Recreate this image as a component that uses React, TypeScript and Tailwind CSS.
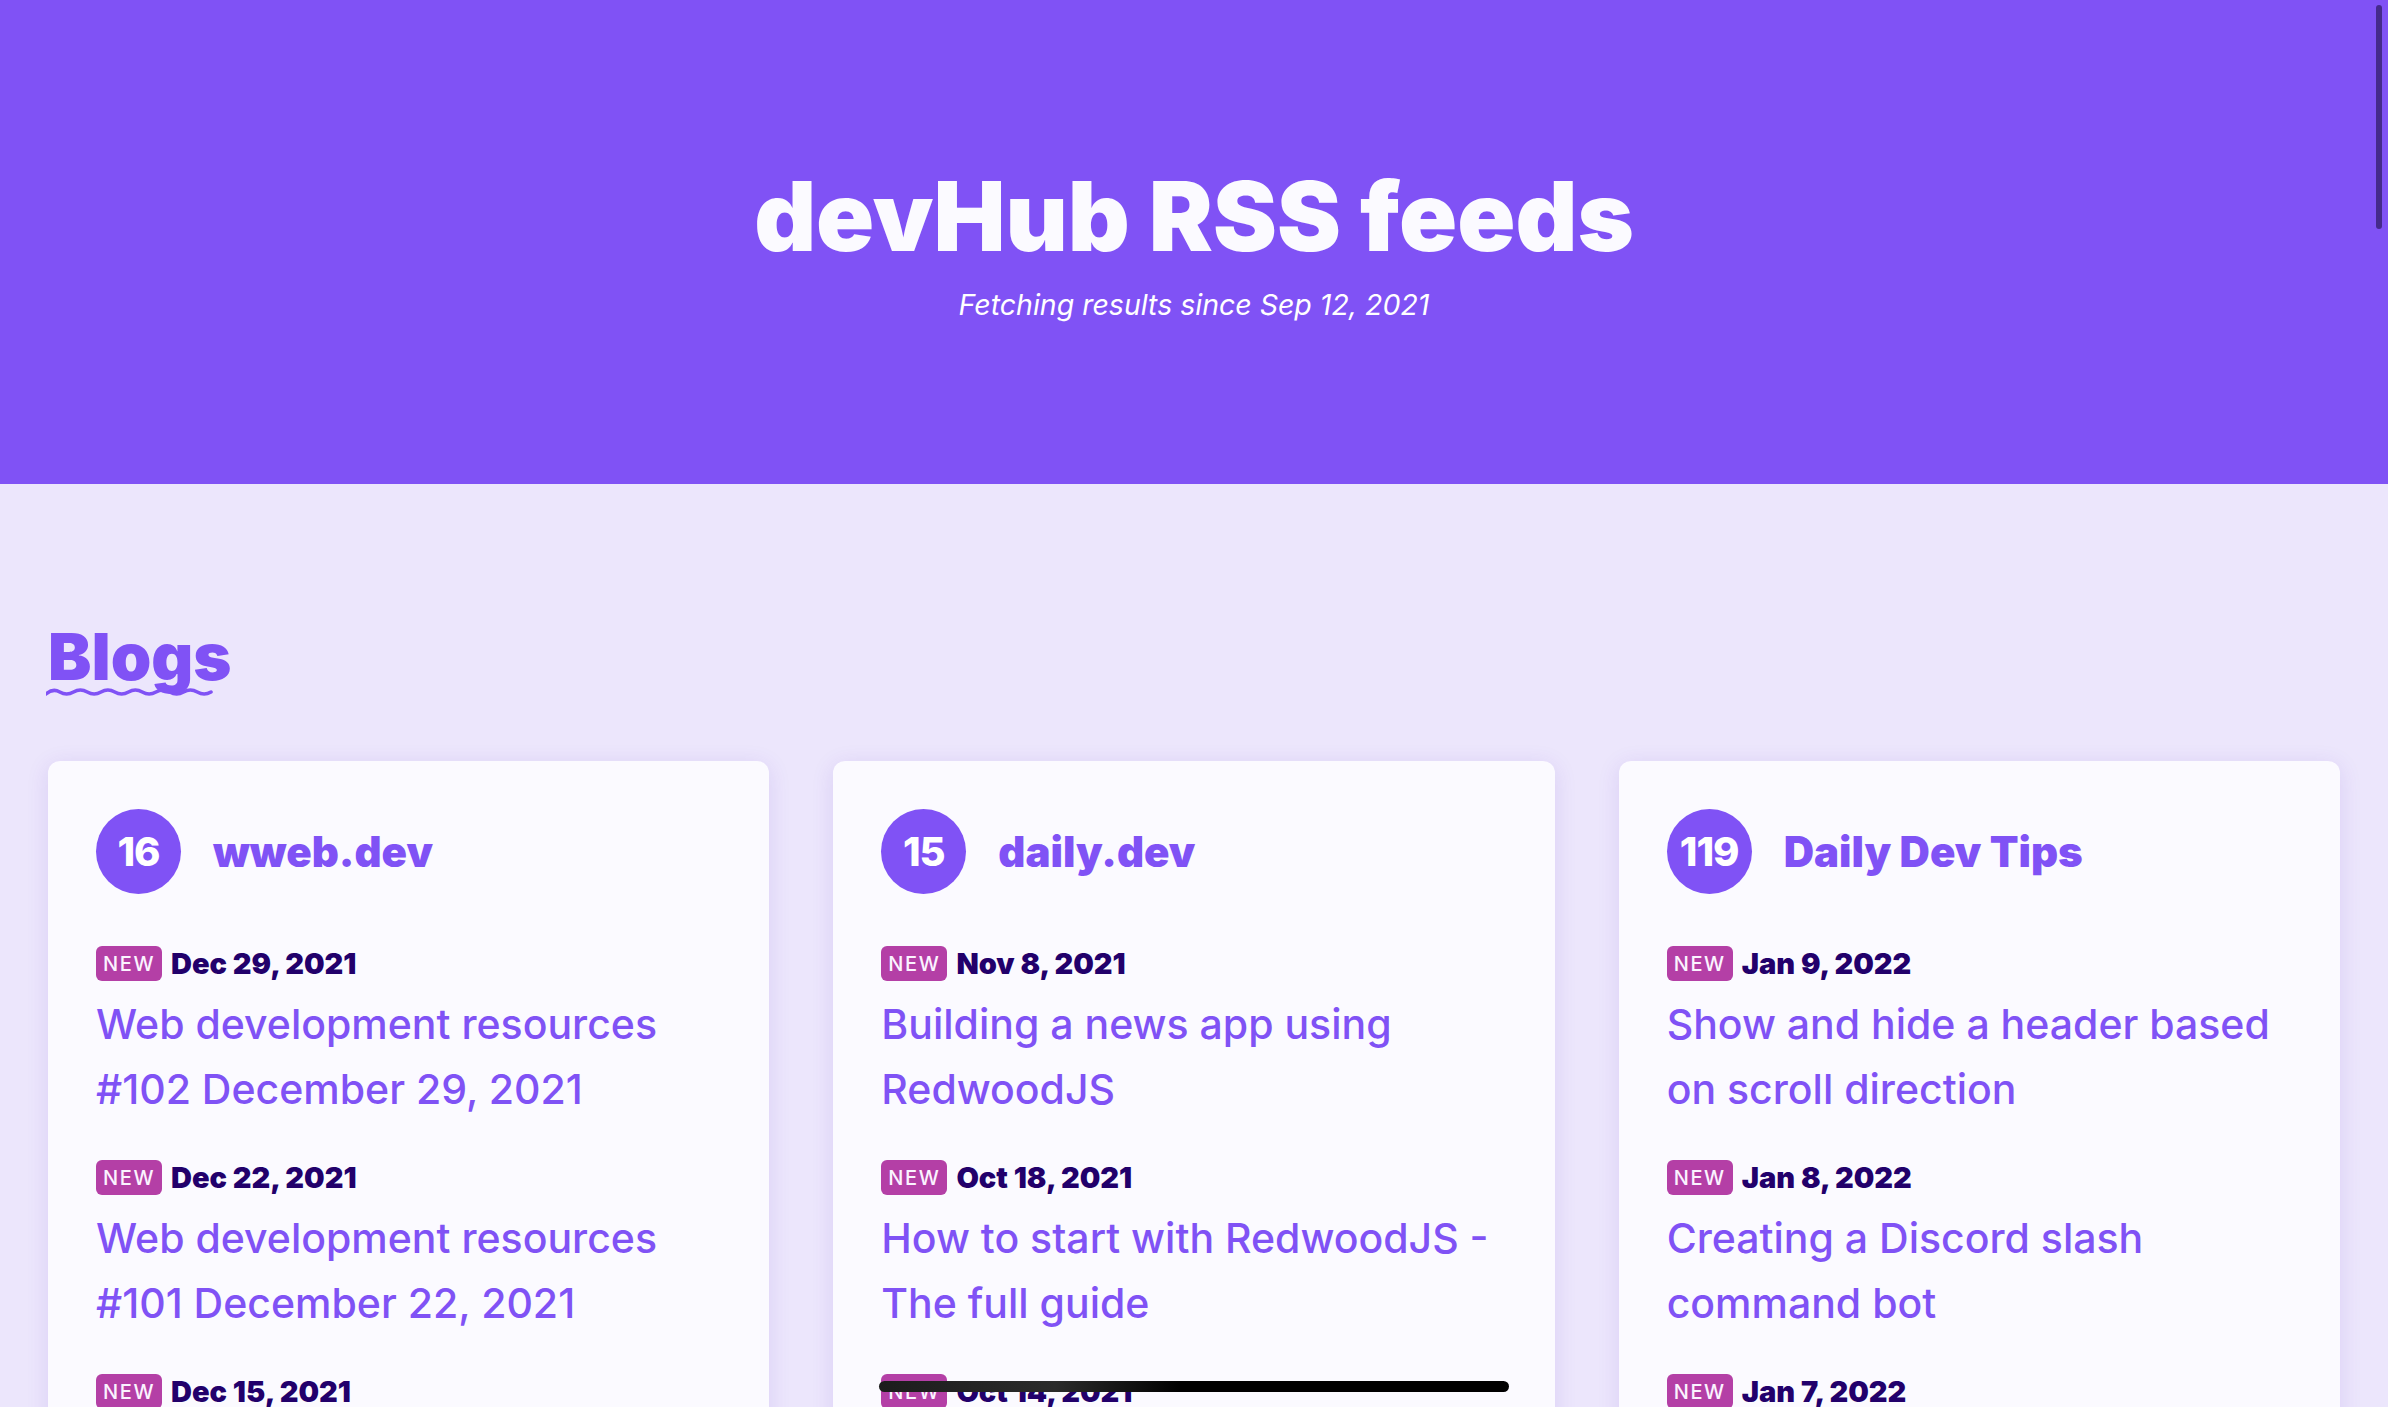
import React from "react";

type FeedItem = {
  date: string;
  title: string;
};

type Feed = {
  count: number;
  name: string;
  items: FeedItem[];
};

const feeds: Feed[] = [
  {
    count: 16,
    name: "wweb.dev",
    items: [
      { date: "Dec 29, 2021", title: "Web development resources #102 December 29, 2021" },
      { date: "Dec 22, 2021", title: "Web development resources #101 December 22, 2021" },
      { date: "Dec 15, 2021", title: "Web development resources #100 December 15, 2021" },
    ],
  },
  {
    count: 15,
    name: "daily.dev",
    items: [
      { date: "Nov 8, 2021", title: "Building a news app using RedwoodJS" },
      { date: "Oct 18, 2021", title: "How to start with RedwoodJS - The full guide" },
      { date: "Oct 14, 2021", title: "Getting started with RedwoodJS" },
    ],
  },
  {
    count: 119,
    name: "Daily Dev Tips",
    items: [
      { date: "Jan 9, 2022", title: "Show and hide a header based on scroll direction" },
      { date: "Jan 8, 2022", title: "Creating a Discord slash command bot" },
      { date: "Jan 7, 2022", title: "Rendering a Discord embed message" },
    ],
  },
];

// little wave drawn under the section title
const Squiggle = () => {
  const period = 27.5;
  let d = "M0 6";
  for (let i = 0; i < 6; i++) {
    const x = i * period;
    d += ` Q${x + period / 4} 0 ${x + period / 2} 4 T${x + period} 4`;
  }
  return (
    <svg width="170" height="12" viewBox="0 0 170 12" className="absolute left-[-2px] top-[63px]">
      <path d={d} fill="none" stroke="#8052F5" strokeWidth="3.5" strokeLinecap="round" />
    </svg>
  );
};

const FeedCard = ({ feed }: { feed: Feed }) => (
  <div className="bg-[#FBFAFF] rounded-xl p-12 shadow-[0_4px_22px_rgba(90,50,190,0.13)]">
    <div className="flex items-center gap-8">
      <div className="w-[85px] h-[85px] rounded-full bg-[#8052F5] flex items-center justify-center shrink-0">
        <span className="text-[40px] leading-none font-extrabold text-white tracking-tight">{feed.count}</span>
      </div>
      <h3 className="text-[42px] leading-none font-black text-[#8052F5]">{feed.name}</h3>
    </div>

    <ul className="mt-[52px] flex flex-col gap-[38px]">
      {feed.items.map((item, index) => (
        <li key={index} className="flex flex-col">
          <div className="flex items-center gap-[9px] h-[35px]">
            <span className="h-[35px] px-[7px] rounded-md bg-[#B43FA6] text-[#FBF3FF] text-[20px] font-medium tracking-[0.08em] flex items-center">
              NEW
            </span>
            <span className="text-[29px] font-black text-[#22006B] leading-none">{item.date}</span>
          </div>
          <a className="mt-[11px] text-[41px] leading-[65px] font-medium text-[#8052F5]">{item.title}</a>
        </li>
      ))}
    </ul>
  </div>
);

export default function App() {
  return (
    <div className="relative h-screen overflow-hidden bg-[#ECE6FC] font-['Inter','Noto_Sans',sans-serif]">
      <header className="h-[484px] bg-[#8052F5] flex flex-col items-center pt-[168px]">
        <h1 className="text-[96px] leading-none font-black text-[#FBFAFF]">devHub RSS feeds</h1>
        <p className="mt-[24px] text-[28.5px] leading-[34px] italic text-white">Fetching results since Sep 12, 2021</p>
      </header>

      <main className="px-12 pt-[141px]">
        <div className="relative inline-block">
          <h2 className="text-[65px] leading-[64px] font-black text-[#8052F5]">Blogs</h2>
          <Squiggle />
        </div>

        <div className="mt-[72px] grid grid-cols-3 gap-16">
          {feeds.map((feed) => (
            <FeedCard key={feed.name} feed={feed} />
          ))}
        </div>
      </main>

      {/* overlay scrollbar */}
      <div className="absolute right-[6px] top-[5px] w-[6px] h-[224px] rounded-full bg-[#452A8C]" />
      {/* bottom indicator bar */}
      <div className="absolute left-1/2 -translate-x-1/2 bottom-[15px] w-[630px] h-[11px] rounded-full bg-[linear-gradient(90deg,#1c1c1c_0%,#2b2b2b_28%,#000_48%,#000_100%)]" />
    </div>
  );
}
